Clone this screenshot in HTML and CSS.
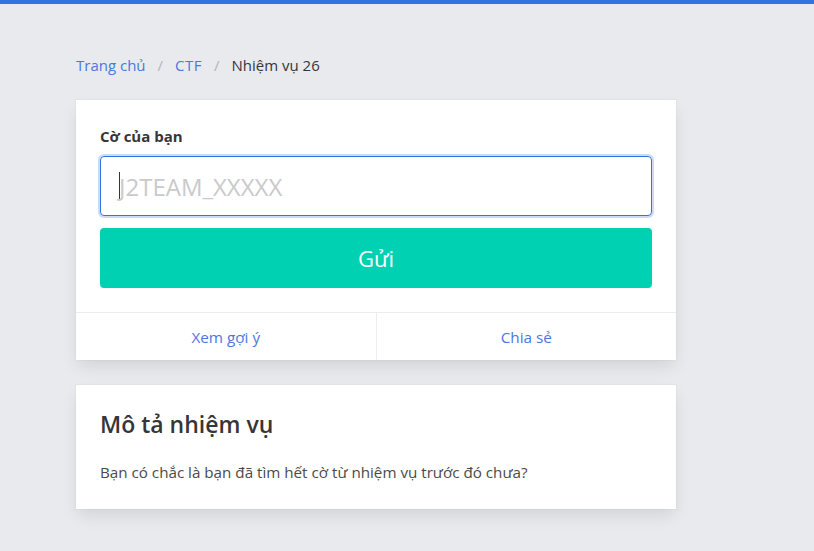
FILE: index.html
```html
<!DOCTYPE html>
<html lang="vi">
<head>
<meta charset="utf-8">
<link rel="stylesheet" href="styles.css">
</head>
<body>
<div class="topbar"></div>
<main class="container">
  <nav class="breadcrumb">
    <a href="#">Trang chủ</a>
    <span class="sep">/</span>
    <a href="#" class="ctf">CTF</a>
    <span class="sep">/</span>
    <span class="current">Nhiệm vụ 26</span>
  </nav>
  <section class="card">
    <div class="card-content">
      <label class="label">Cờ của bạn</label>
      <div class="input"><span class="caret"></span><span class="placeholder">J2TEAM_XXXXX</span></div>
      <button class="button">Gửi</button>
    </div>
    <footer class="card-footer">
      <a href="#" class="footer-item">Xem gợi ý</a>
      <a href="#" class="footer-item">Chia sẻ</a>
    </footer>
  </section>
  <section class="card desc">
    <div class="card-content">
      <h2 class="title">Mô tả nhiệm vụ</h2>
      <p class="text">Bạn có chắc là bạn đã tìm hết cờ từ nhiệm vụ trước đó chưa?</p>
    </div>
  </section>
</main>
</body>
</html>
```
FILE: styles.css
```css
* { box-sizing: border-box; }
html, body { margin: 0; padding: 0; }
body {
  background: #e9eaee;
  font-family: "Open Sans", "Noto Sans", sans-serif;
  color: #4a4a4a;
  font-size: 15px;
  height: 551px;
  overflow: hidden;
}
.topbar { height: 4px; background: #3273dc; }
.container { width: 600px; margin-left: 76px; padding-top: 50px; }
.breadcrumb { display: flex; align-items: center; font-size: 15px; height: 22px; margin-bottom: 24px; }
.breadcrumb a { color: #4a77e0; text-decoration: none; }
.breadcrumb .ctf { letter-spacing: 0.5px; }
.breadcrumb .sep { color: #b5b5b5; padding: 0 12px; }
.breadcrumb .current { color: #363636; }
.card {
  background: #fff;
  box-shadow: 0 8px 16px -2px rgba(10,10,10,0.1), 0 0 0 1px rgba(10,10,10,0.02);
}
.card-content { padding: 26px 24px 24px; }
.label { display: block; font-weight: 700; color: #363636; font-size: 15px; line-height: 20px; margin-bottom: 10px; }
.input {
  height: 60px;
  border: 1px solid #3273dc;
  border-radius: 4px;
  box-shadow: 0 0 0 2px rgba(50,115,220,0.25);
  display: flex; align-items: center;
  padding-left: 18px;
  position: relative;
}
.caret { width: 1px; height: 28px; background: #363636; margin-right: -1px; }
.placeholder { color: #cacaca; font-size: 24px; font-weight: 400; }
.button {
  display: block; width: 100%;
  margin-top: 12px;
  height: 60px;
  background: #00d1b2;
  border: none; border-radius: 4px;
  color: #fff;
  font-family: inherit;
  font-size: 22px;
}
.card-footer { display: flex; border-top: 1px solid #ededed; height: 48px; }
.footer-item {
  flex: 1; display: flex; align-items: center; justify-content: center;
  color: #4a77e0; text-decoration: none; font-size: 15.3px;
}
.footer-item + .footer-item { border-left: 1px solid #ededed; }
.desc { margin-top: 25px; }
.desc .card-content { padding: 24px 24px 26px; }
.title { margin: 0 0 22px; font-size: 23px; font-weight: 600; color: #363636; line-height: 30px; }
.text { margin: 0; font-size: 15.2px; line-height: 22px; }
```
